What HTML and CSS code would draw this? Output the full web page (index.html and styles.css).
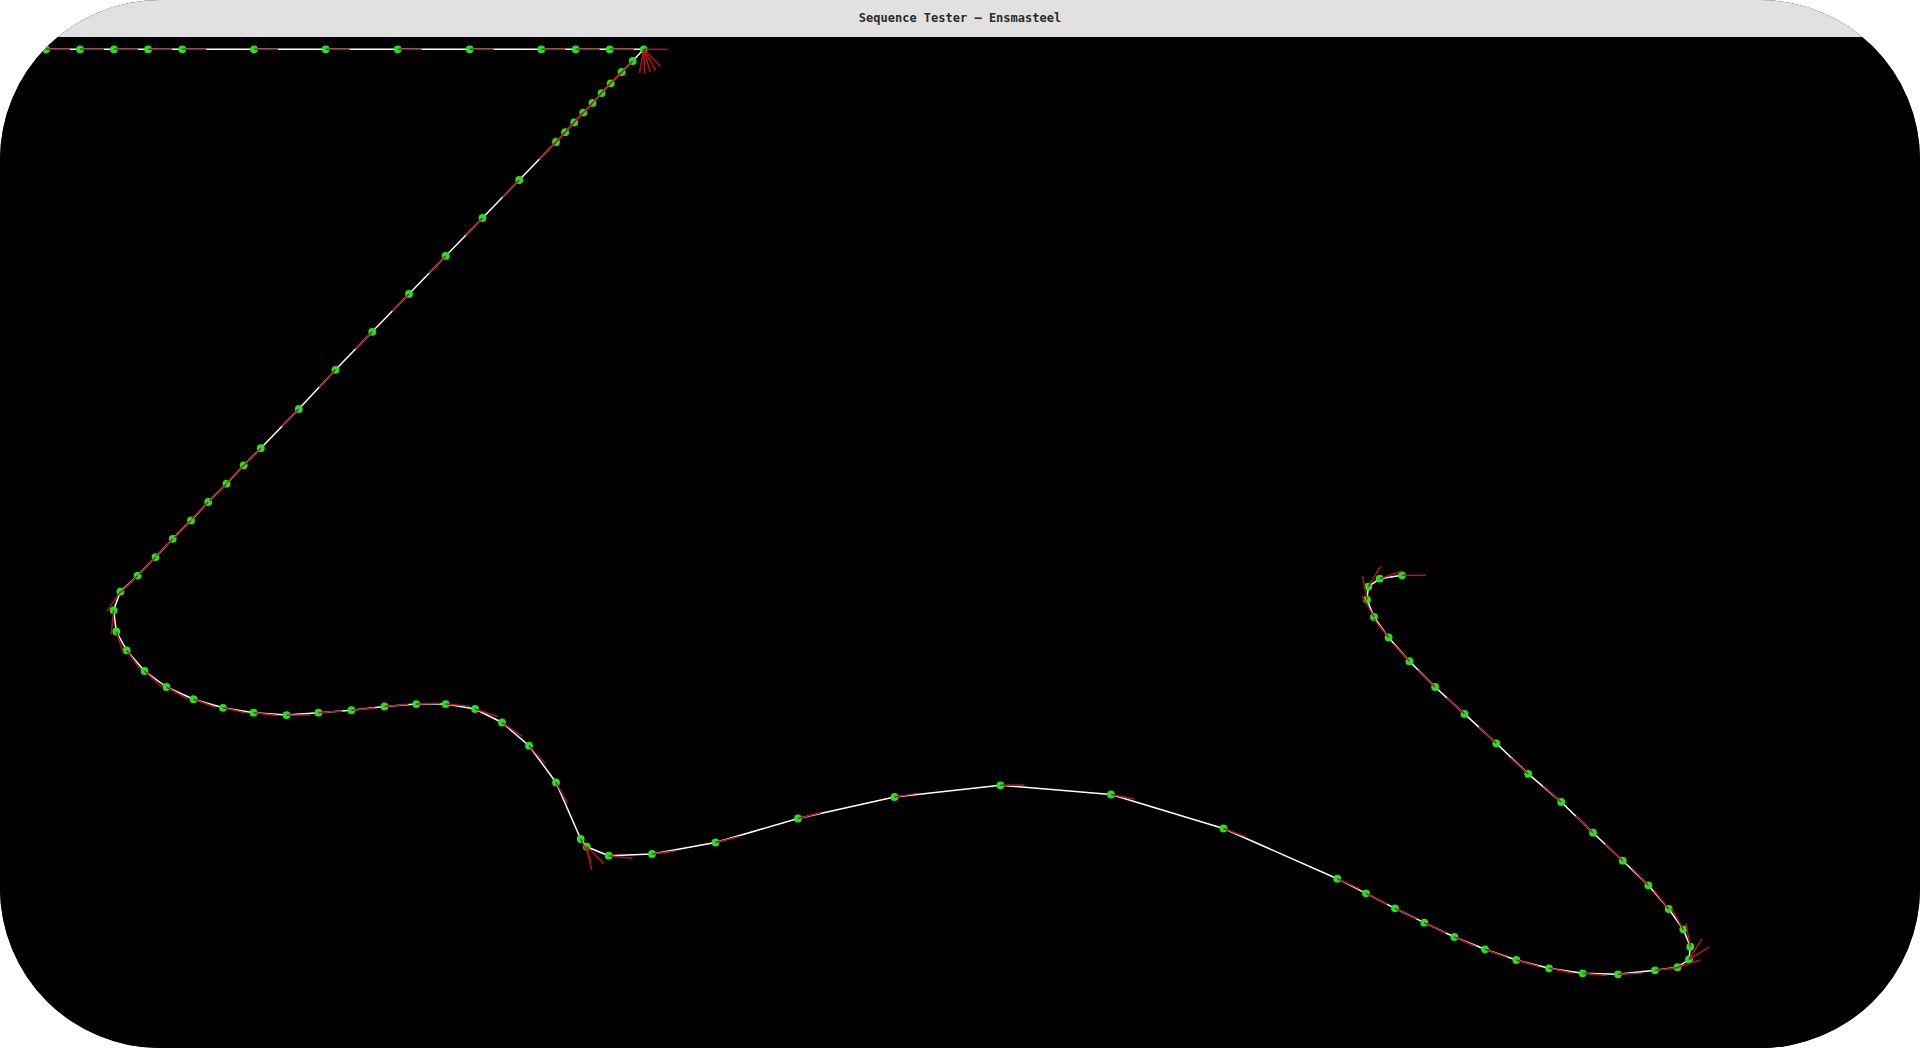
FILE: index.html
```html
<!DOCTYPE html>
<html lang="en">
<head>
<meta charset="utf-8">
<title>Sequence Tester – Ensmasteel</title>
<link rel="stylesheet" href="styles.css">
</head>
<body>
<div class="window">
  <header class="titlebar"><span class="title">Sequence Tester – Ensmasteel</span></header>
  <main class="viewport">
    <svg id="plot" class="plot" width="1920" height="1011" viewBox="0 37 1920 1011" xmlns="http://www.w3.org/2000/svg"></svg>
  </main>
</div>
<script src="script.js"></script>
</body>
</html>
```

FILE: styles.css
```css
html, body {
  margin: 0;
  padding: 0;
  background: #ffffff;
}

.window {
  width: 1920px;
  height: 1048px;
  border-radius: 160px;
  overflow: hidden;
  display: flex;
  flex-direction: column;
  background: #000000;
}

.titlebar {
  height: 37px;
  flex: 0 0 37px;
  background: #e1e1e1;
  display: flex;
  align-items: center;
  justify-content: center;
}

.title {
  font-family: "DejaVu Sans Mono", "Liberation Mono", monospace;
  font-weight: bold;
  font-size: 12px;
  color: #2b2b2b;
  line-height: 14px;
  padding-bottom: 2px;
}

.viewport {
  flex: 1 1 auto;
  background: #000000;
  overflow: hidden;
}

.plot {
  display: block;
}

.track {
  fill: none;
  stroke: #ffffff;
  stroke-width: 1.5;
  stroke-linejoin: round;
}

.dot {
  fill: #22e222;
}

.heading {
  stroke: #b41414;
  stroke-width: 1.5;
  stroke-linecap: butt;
}
```

FILE: script.js
```js
(function () {
  var NS = 'http://www.w3.org/2000/svg';
  var svg = document.getElementById('plot');

  // [x, y, optional heading angles in degrees]
  var P = [
    [46, 49.3], [80, 49.3], [114, 49.3], [148, 49.3], [182.3, 49.3],
    [254, 49.3], [325.7, 49.3], [397.7, 49.3], [469.7, 49.3], [541.3, 49.3],
    [575.7, 49.3], [609.7, 49.3], [643.7, 49.3, [0, 45, 60, 74, 88, 100]],
    [632.7, 61], [621.7, 72], [610.7, 83.3], [601.6, 93.1], [592.5, 102.9],
    [583.3, 112.6], [574.2, 122.4], [565.1, 132.2], [556, 142],
    [519.2, 180], [482.5, 218], [445.7, 255.9], [409, 293.9], [372.2, 331.8],
    [335.5, 369.8], [298.8, 409], [260.8, 448.2], [243.7, 465.3], [226.5, 483.7],
    [208.2, 502], [191, 520.4], [172.7, 538.8], [155.5, 557.1], [137.6, 575.6],
    [120.4, 591.6], [113.6, 610.3], [116.3, 631.5], [126.7, 650.4], [144.5, 671],
    [166.5, 687], [193.5, 699.2], [222.9, 707.8], [253.5, 712.7], [286.5, 715.1],
    [318.4, 712.7], [351.4, 710.2], [384.5, 706.5], [416.3, 704.1], [445.7, 704.1],
    [475.1, 709], [502, 722.5], [529, 745.7], [556, 782.5], [580.7, 839],
    [586.7, 846.7, [44, 78]], [608.7, 855.7], [652, 854], [715.5, 842.5],
    [798, 818.5], [894.5, 797], [1000.4, 785.3], [1111, 794.5], [1223.5, 828.5],
    [1337.3, 878.7], [1366, 893.3], [1395, 908.3], [1424.3, 922.7], [1454.3, 937],
    [1485, 949.3], [1516.3, 960], [1549, 968.3], [1582.7, 973.3], [1618, 974.3],
    [1655, 970.3], [1677.5, 967.2], [1689, 959.5, [-58, -32]], [1690.3, 946.7],
    [1683.3, 929.3], [1668.7, 909], [1648.3, 885.3], [1622.7, 860.7], [1593, 832.7],
    [1561.2, 802], [1528.2, 773.9], [1496.3, 743.3], [1464.5, 713.9], [1435.1, 687],
    [1409.4, 661.2], [1388.6, 637.5], [1374, 617], [1367, 599.7], [1368.3, 586.7],
    [1379.7, 578.7], [1402, 575.3, [0]]
  ];

  var LEN = 24;

  function el(name, attrs) {
    var e = document.createElementNS(NS, name);
    for (var k in attrs) e.setAttribute(k, attrs[k]);
    return e;
  }

  var pts = P.map(function (p) { return p[0] + ',' + p[1]; }).join(' ');
  svg.appendChild(el('polyline', { 'class': 'track', points: pts }));

  var dots = el('g', {});
  P.forEach(function (p) {
    dots.appendChild(el('circle', { 'class': 'dot', cx: p[0], cy: p[1], r: 3.9 }));
  });
  svg.appendChild(dots);

  var heads = el('g', {});
  var n = P.length;
  P.forEach(function (p, i) {
    var angles;
    if (p[2]) {
      angles = p[2].map(function (a) { return a * Math.PI / 180; });
    } else {
      var a = P[Math.max(i - 1, 0)], b = P[Math.min(i + 1, n - 1)];
      angles = [Math.atan2(b[1] - a[1], b[0] - a[0])];
    }
    angles.forEach(function (t) {
      heads.appendChild(el('line', {
        'class': 'heading',
        x1: p[0], y1: p[1],
        x2: (p[0] + LEN * Math.cos(t)).toFixed(2),
        y2: (p[1] + LEN * Math.sin(t)).toFixed(2)
      }));
    });
  });
  svg.appendChild(heads);
})();
```
